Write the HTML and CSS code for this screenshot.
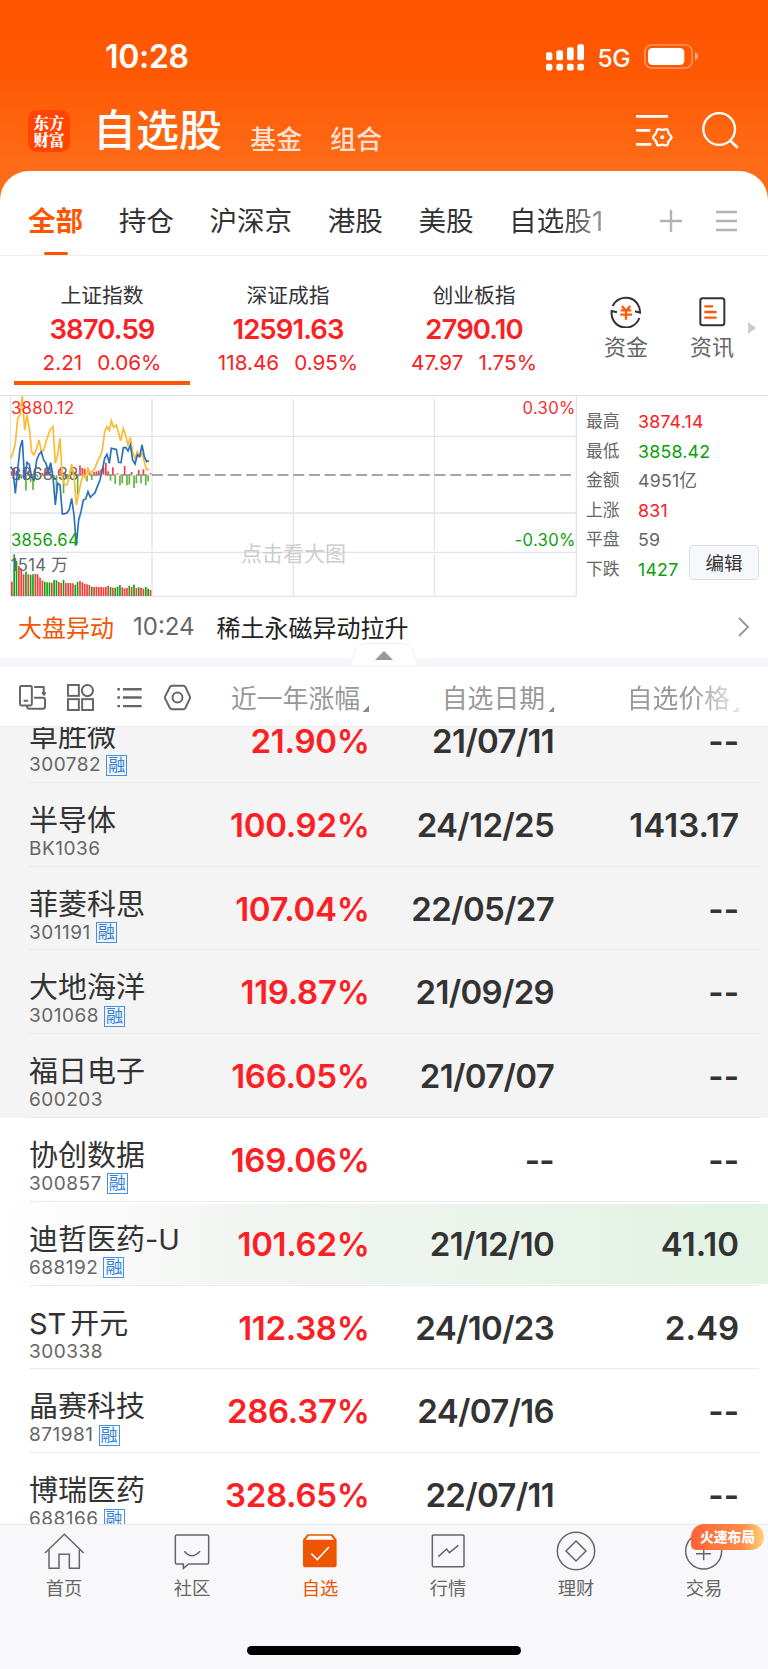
FILE: index.html
```html
<!DOCTYPE html>
<html lang="zh-CN">
<head>
  <meta charset="UTF-8" />
  <meta name="viewport" content="width=device-width, initial-scale=1.0"/>
  <title>自选股</title>
  <link rel="stylesheet" href="styles.css">
</head>
<body>

  <header class="header">
    <div class="status-bar">
      <span class="time">10:28</span>
      <svg class="signal" viewBox="0 0 114 80" width="38" height="27" fill="#fff">
        <rect x="0" y="24" width="19" height="24" rx="6"/><rect x="31" y="18" width="20" height="30" rx="6"/>
        <rect x="63" y="9" width="20" height="39" rx="6"/><rect x="94" y="0" width="20" height="48" rx="6"/>
        <rect x="0" y="59" width="19" height="20" rx="6"/><rect x="31" y="59" width="20" height="20" rx="6"/>
        <rect x="63" y="59" width="20" height="20" rx="6"/><rect x="94" y="59" width="20" height="20" rx="6"/>
      </svg>
      <span class="network">5G</span>
      <svg class="battery" viewBox="0 0 162 76" width="54" height="25.3">
        <rect x="2.5" y="2.5" width="142" height="70" rx="21" fill="none" stroke="#fff" stroke-opacity=".45" stroke-width="4"/>
        <rect x="12" y="12" width="109" height="51" rx="13" fill="#fff"/>
        <path d="M153 24Q162 28 162 37Q162 46 153 50Z" fill="#fff" fill-opacity=".5"/>
      </svg>
    </div>
    <div class="app-bar">
      <div class="logo">东方<br>财富</div>
      <h1>自选股</h1>
      <a class="sub">基金</a>
      <a class="sub">组合</a>
      <svg class="icon-filter" viewBox="0 0 112 100" width="37.3" height="33.3" fill="none" stroke="#fff" stroke-width="8">
        <path d="M0 7H96M0 49H43M0 91H46"/>
        <path d="M103.6 64.8Q110 70 103.6 75.2Q97.2 80.5 95.8 88.6Q94.5 96.8 86.8 93.9Q79 91 71.2 93.9Q63.5 96.8 62.2 88.6Q60.8 80.5 54.4 75.2Q48 70 54.4 64.8Q60.8 59.5 62.2 51.4Q63.5 43.2 71.2 46.1Q79 49 86.8 46.1Q94.5 43.2 95.8 51.4Q97.2 59.5 103.6 64.8Z" stroke-width="7"/>
        <circle cx="79" cy="70" r="6" fill="#fff" stroke="none"/>
      </svg>
      <svg class="icon-search" viewBox="0 0 110 110" width="36.7" height="36.7" fill="none" stroke="#fff" stroke-width="7">
        <circle cx="51.5" cy="51" r="47.5"/>
        <path d="M85 86L107 107" stroke-width="8"/>
      </svg>
    </div>
  </header>

  <main class="panel">
    <nav class="groups">
      <a class="active">全部</a>
      <a>持仓</a>
      <a>沪深京</a>
      <a>港股</a>
      <a>美股</a>
      <a class="fade">自选股1</a>
      <svg class="icon-add" viewBox="0 0 22 22" width="22" height="22" stroke="#b3b3b3" stroke-width="2.4"><path d="M0 11H22M11 0V22"/></svg>
      <svg class="icon-menu" viewBox="0 0 21 22" width="21" height="22" stroke="#b3b3b3" stroke-width="2.4"><path d="M0 2H21M0 11H21M0 20H21"/></svg>
    </nav>

    <section class="indices">
      <div class="index active">
        <span class="label">上证指数</span>
        <strong>3870.59</strong>
        <span class="change"><i>2.21</i><i>0.06%</i></span>
      </div>
      <div class="index">
        <span class="label">深证成指</span>
        <strong>12591.63</strong>
        <span class="change"><i>118.46</i><i>0.95%</i></span>
      </div>
      <div class="index">
        <span class="label">创业板指</span>
        <strong>2790.10</strong>
        <span class="change"><i>47.97</i><i>1.75%</i></span>
      </div>
      <div class="shortcut">
        <svg viewBox="0 0 96 96" width="32" height="32" fill="none" stroke="#333" stroke-width="6">
          <path d="M8 30A43 43 0 0 1 90 50L75 46M88 66A43 43 0 0 1 5 45L21 49"/>
          <g stroke="#ff5a0a" stroke-width="7"><path d="M36 30L46 42M61 30L50 42M32 43H64M31 56H66M48 42V71"/></g>
        </svg>
        <span>资金</span>
      </div>
      <div class="shortcut">
        <svg viewBox="0 0 96 96" width="32" height="32" fill="none" stroke="#333" stroke-width="6">
          <rect x="13" y="7" width="72" height="81" rx="7"/>
          <path d="M25 31H51M25 48H62M25 65H62" stroke="#ff5a0a" stroke-width="7"/>
        </svg>
        <span>资讯</span>
      </div>
      <span class="more"></span>
    </section>

    <section class="market">
      <svg class="chart" viewBox="30 15 1704 606" width="568" height="202">
        <g fill="none" stroke="#e1e4ec" stroke-width="4">
          <path d="M31 17V620M31 619H1730"/>
          <path d="M31 139H1729M31 369H1729M31 487H1729M456 25V482M456 493V619M880 25V482M880 493V619M1303 25V482M1303 493V619M1729 17V619"/>
        </g>
        <text class="watermark" x="723" y="512">点击看大图</text>
        <path d="M32 255H1713" stroke="#888" stroke-width="4" stroke-dasharray="33 14.1"/>
        <g id="bars"></g>
        <text class="mid" x="33" y="270">3868.38</text>
        <text class="mid" x="32" y="543">1514 万</text>
        <g fill="none" stroke-width="5">
          <polyline stroke="#ffb92e" points="32,205 40,185 46,160 53,85 60,75 67,18 74,120 81,75 88,115 95,185 102,195 110,175 117,150 124,185 131,180 138,155 150,120 159,110 166,220 173,195 180,145 187,265 194,285 201,285 208,260 215,222 222,260 229,345 236,310 243,275 250,255 257,265 264,235 271,250 285,235 292,215 300,200 307,180 314,125 321,110 328,122 334,92 341,112 349,105 362,152 370,115 378,140 384,165 391,142 398,185 405,205 412,185 419,200 426,190 433,215 440,240 447,236"/>
          <polyline stroke="#296fbe" points="32,230 39,240 46,310 53,240 60,175 67,150 74,270 81,217 88,223 95,262 102,270 110,210 117,193 124,185 131,210 138,220 145,245 152,218 159,260 166,345 173,280 180,285 187,372 194,371 201,369 208,358 215,325 222,375 229,465 236,390 243,365 250,330 257,327 264,305 271,322 278,315 285,308 292,290 300,270 307,240 314,205 321,193 328,220 334,175 349,178 356,217 363,218 370,173 377,172 384,183 391,165 398,210 405,222 412,195 419,200 426,165 433,200 440,215 447,212"/>
        </g>
        <text class="up" x="33" y="72">3880.12</text>
        <text class="up" x="1727" y="72" text-anchor="end">0.30%</text>
        <text class="down" x="33" y="469">3856.64</text>
        <text class="down" x="1727" y="469" text-anchor="end">-0.30%</text>
      </svg>
      <dl class="stats">
        <dt>最高</dt><dd class="up">3874.14</dd>
        <dt>最低</dt><dd class="down">3858.42</dd>
        <dt>金额</dt><dd>4951亿</dd>
        <dt>上涨</dt><dd class="up">831</dd>
        <dt>平盘</dt><dd>59</dd>
        <dt>下跌</dt><dd class="down">1427</dd>
      </dl>
      <button class="edit">编辑</button>
    </section>

    <section class="news">
      <span class="tag">大盘异动</span>
      <span class="when">10:24</span>
      <span class="headline">稀土永磁异动拉升</span>
      <svg viewBox="0 0 12 20" width="12" height="20" fill="none" stroke="#999" stroke-width="2"><path d="M1 1L10 10L1 19"/></svg>
      <svg class="handle" viewBox="0 0 66 23" width="66" height="23">
        <path d="M0 22.5Q1 17 3 11Q5 1 15 .5H51Q61 1 63 11Q65 17 66 22.5" fill="#fff" stroke="#f0f1f4"/>
        <path d="M24 17L33 8L42 17Z" fill="#999"/>
      </svg>
    </section>

    <section class="toolbar">
      <div class="tools">
        <svg viewBox="0 0 82 82" width="27" height="27" fill="none" stroke="#666" stroke-width="6">
          <rect x="3" y="6" width="36" height="59" rx="4"/>
          <path d="M14 51H28M46 9H75V29M70 25L76 32L81 25M46 42H72Q79 42 79 48V68Q79 75 73 75H31Q24 75 24 65"/>
        </svg>
        <svg viewBox="0 0 82 82" width="27" height="27" fill="none" stroke="#666" stroke-width="6">
          <rect x="3" y="3" width="33" height="33"/><circle cx="62" cy="20" r="17"/>
          <rect x="3" y="46" width="33" height="33"/><rect x="46" y="46" width="33" height="33"/>
        </svg>
        <svg viewBox="0 0 82 82" width="27" height="27" fill="none" stroke="#666" stroke-width="7">
          <path d="M21 16H78M21 41H78M21 67H78"/>
          <path d="M4 16H12M4 41H12M4 67H12"/>
        </svg>
        <svg viewBox="0 0 82 82" width="27" height="27" fill="none" stroke="#666" stroke-width="6">
          <path d="M23 5H60L65 9L78 37Q80 41 78 45L65 73L60 77H23L18 73L4 45Q2 41 4 37L18 9Z"/>
          <circle cx="41" cy="41" r="15"/>
        </svg>
      </div>
      <span class="col">近一年涨幅</span>
      <span class="col">自选日期</span>
      <span class="col fade">自选价格</span>
    </section>

    <section class="list">
      <div class="row pinned"><div class="name">卓胜微</div><div class="code">300782<em>融</em></div><b class="up">21.90%</b><b class="date">21/07/11</b><b>--</b></div>
      <div class="row pinned"><div class="name">半导体</div><div class="code">BK1036</div><b class="up">100.92%</b><b class="date">24/12/25</b><b>1413.17</b></div>
      <div class="row pinned"><div class="name">菲菱科思</div><div class="code">301191<em>融</em></div><b class="up">107.04%</b><b class="date">22/05/27</b><b>--</b></div>
      <div class="row pinned"><div class="name">大地海洋</div><div class="code">301068<em>融</em></div><b class="up">119.87%</b><b class="date">21/09/29</b><b>--</b></div>
      <div class="row pinned"><div class="name">福日电子</div><div class="code">600203</div><b class="up">166.05%</b><b class="date">21/07/07</b><b>--</b></div>
      <div class="row"><div class="name">协创数据</div><div class="code">300857<em>融</em></div><b class="up">169.06%</b><b class="date">--</b><b>--</b></div>
      <div class="row flash"><div class="name">迪哲医药-U</div><div class="code">688192<em>融</em></div><b class="up">101.62%</b><b class="date">21/12/10</b><b>41.10</b></div>
      <div class="row"><div class="name">ST<span>开元</span></div><div class="code">300338</div><b class="up">112.38%</b><b class="date">24/10/23</b><b>2.49</b></div>
      <div class="row"><div class="name">晶赛科技</div><div class="code">871981<em>融</em></div><b class="up">286.37%</b><b class="date">24/07/16</b><b>--</b></div>
      <div class="row"><div class="name">博瑞医药</div><div class="code">688166<em>融</em></div><b class="up">328.65%</b><b class="date">22/07/11</b><b>--</b></div>
    </section>
  </main>

  <footer class="tab-bar">
    <nav>
      <a>
        <svg viewBox="0 0 120 120" width="40" height="40"><path d="M3 66L61 10L119 66M15 56V112H45V70H76V112H106V56"/></svg>
        首页
      </a>
      <a>
        <svg viewBox="0 0 120 120" width="40" height="40"><path d="M14 12H106Q110 12 110 16V95Q110 99 106 99H50L34 112V99H14Q10 99 10 95V16Q10 12 14 12ZM37 61Q59 88 84 61"/></svg>
        社区
      </a>
      <a class="active">
        <svg viewBox="0 0 120 120" width="40" height="40">
          <path class="solid" d="M22 10H98L110 26V102Q110 109 102 109H17Q9 109 9 102V26Z"/>
          <path class="lid" d="M26 14H93L102 26H17Z"/>
          <path class="tick" d="M34 68L52 86L87 48"/>
        </svg>
        自选
      </a>
      <a>
        <svg viewBox="0 0 120 120" width="40" height="40"><rect x="13" y="12" width="95" height="95" rx="3"/><path d="M31 77L56 54L64 65L91 43"/></svg>
        行情
      </a>
      <a>
        <svg viewBox="0 0 120 120" width="40" height="40"><circle cx="60" cy="60" r="56"/><path d="M60 30L90 60L60 90L30 60Z"/></svg>
        理财
      </a>
      <a>
        <svg viewBox="0 0 120 120" width="40" height="40"><circle cx="59" cy="60" r="54"/><path d="M40 30L59 50L78 30M36 50H81M36 68H81M59 50V88"/></svg>
        交易
        <span class="badge">火速布局</span>
      </a>
    </nav>
    <div class="home-indicator"></div>
  </footer>

  <script>
    const RED = "#f23c3c";
    const GREEN = "#14a014";
    const STEP = 7.05;
    const bars = document.getElementById("bars");

    function addBar(i, top, height, color) {
      const rect = document.createElementNS("http://www.w3.org/2000/svg", "rect");
      rect.setAttribute("x", 33 + i * STEP);
      rect.setAttribute("y", top);
      rect.setAttribute("width", 5);
      rect.setAttribute("height", height);
      rect.setAttribute("fill", color);
      bars.appendChild(rect);
    }

    // volume per minute, negative = falling
    const volume = [43, -125, -105, 90, 82, 65, -73, 65, -64, -65, 66, 65, 55, 46, -43, -41, -41, 40, -48, -47, 42, 39, -48, 39, 39, 39, 38, -34, -42, 45, 41, 37, 35, 33, -28, 27, 28, 27, 27, 26, 27, 31, -27, 25, -25, -28, -33, 26, 23, 24, -31, 27, -34, 24, -26, 25, 22, -27, -22, 18];
    volume.forEach((v, i) => addBar(i, 618 - Math.abs(v), Math.abs(v), v > 0 ? RED : GREEN));

    // strength around the middle line
    const strength = [10, 20, 12, -15, -10, 15, -46, 12, -20, -44, -8, -6, 5, 5, 8, 16, 5, -8, -14, -56, 15, 22, -54, -10, -14, -8, 14, 8, -58, 28, 20, 18, -18, 10, -14, 8, 10, 12, 16, 22, 36, 10, -16, 22, -26, 4, -30, -24, 26, -30, -28, 8, -38, -24, 14, -24, 16, -30, -18, 4];
    strength.forEach((v, i) => addBar(i, v > 0 ? 254 - v : 256, Math.abs(v), v > 0 ? RED : "#5fb53c"));
  </script>

</body>
</html>
```
FILE: styles.css
```css
* {
  margin: 0;
  padding: 0;
  box-sizing: border-box;
}

body {
  width: 768px;
  height: 1669px;
  overflow: hidden;
  font-family: Inter, 'Noto Sans CJK SC', sans-serif;
  color: #333;
  background: linear-gradient(#ff5500 0, #ff5803 75px, #ff6c18 165px, #ff6c18 100%);
}

svg {
  display: block;
  flex: none;
}

.up {
  color: #fb2024;
  fill: #f23030;
}

.down {
  color: #0da00d;
  fill: #0da00d;
}

.header {
  height: 171px;
  color: #fff;
}

.status-bar {
  display: flex;
  align-items: center;
  height: 90px;
  padding: 24px 70px 0 105px;
}

.time {
  font-size: 32px;
  font-weight: 600;
  letter-spacing: -0.3px;
  margin: -2px auto 0 0;
}

.network {
  font-size: 24.5px;
  font-weight: 500;
  letter-spacing: -0.5px;
  margin: 2px 14px 0 14px;
}

.app-bar {
  display: flex;
  align-items: center;
  height: 81px;
  padding: 0 29px 0 28px;
}

.logo {
  width: 42px;
  height: 42px;
  border-radius: 9px;
  background: #ff4503;
  font-family: 'Noto Serif CJK SC', 'Noto Sans CJK SC', serif;
  font-size: 15.5px;
  font-weight: 900;
  line-height: 17px;
  padding-top: 4px;
  text-align: center;
}

h1 {
  margin: -1px 0 0 23px;
  font-size: 43px;
  font-weight: 500;
  line-height: 60px;
}

.sub {
  margin: 13px 0 0 28px;
  font-size: 26px;
  font-weight: 500;
  opacity: 0.8;
}

.icon-filter {
  margin-left: auto;
}

.icon-search {
  margin-left: 29px;
}

.panel {
  height: 1353px;
  overflow: hidden;
  border-radius: 29px 29px 0 0;
  background: #fff;
}

.groups {
  display: flex;
  align-items: center;
  height: 85px;
  padding: 16px 31px 0 28px;
  border-bottom: 1px solid #eee;
}

.groups a {
  position: relative;
  margin-right: 35.5px;
  font-size: 27.6px;
  line-height: 40px;
}

.groups .active {
  color: #ff5500;
  font-weight: 600;
}

.groups .active::after {
  content: "";
  position: absolute;
  left: 16px;
  bottom: -14px;
  width: 24px;
  height: 3px;
  border-radius: 2px;
  background: #ff5500;
}

.groups .fade {
  margin-right: 0;
  white-space: nowrap;
  background: linear-gradient(90deg, #333 50%, #999);
  -webkit-background-clip: text;
  color: transparent;
}

.icon-add {
  margin-left: auto;
}

.icon-menu {
  margin-left: 34px;
}

.indices {
  display: flex;
  height: 139px;
  padding: 25px 0 0 9px;
}

.index {
  width: 186px;
  height: 104px;
  display: flex;
  flex-direction: column;
  align-items: center;
  white-space: nowrap;
}

.index.active {
  background: linear-gradient(#ff5500, #ff5500) center bottom / 176px 4px no-repeat;
}

.index .label {
  font-size: 20.8px;
  line-height: 30px;
}

.index strong {
  color: #fb2024;
  font-size: 27.5px;
  font-weight: 600;
  line-height: 36px;
  letter-spacing: -0.9px;
}

.change {
  display: flex;
  gap: 15px;
  color: #fb2024;
  font-size: 20.7px;
  line-height: 32px;
}

.change i {
  font-style: normal;
}

.shortcut {
  width: 86px;
  padding-top: 15px;
  display: flex;
  flex-direction: column;
  align-items: center;
  font-size: 22px;
  line-height: 39px;
  color: #666;
}

.shortcut:nth-child(4) {
  margin-left: 16px;
}

.more {
  width: 8px;
  height: 12px;
  margin: 41px 0 0 -7px;
  background: #ccc;
  clip-path: polygon(0 0, 100% 50%, 0 100%);
}

.market {
  display: flex;
  height: 202px;
  padding-left: 10px;
  border-top: 1px solid #dcdfe8;
}

.chart {
  margin-top: -1px;
}

.chart text {
  font-size: 50px;
  letter-spacing: 0.9px;
}

.chart .mid {
  fill: #666;
}

.chart .watermark {
  fill: #ccc;
  font-size: 63px;
  letter-spacing: 0;
}

.stats {
  display: grid;
  grid-template-columns: 52px auto;
  grid-auto-rows: 29.6px;
  align-content: start;
  padding: 11px 0 0 8px;
  line-height: 29.6px;
  color: #666;
  width: 110px;
  white-space: nowrap;
}

.stats dt {
  font-size: 16.8px;
}

.stats dd {
  font-size: 17.8px;
  letter-spacing: 0.2px;
}

.edit {
  align-self: flex-end;
  width: 70px;
  height: 35px;
  margin: 0 0 17px 1px;
  border: 1px solid #dcdfe6;
  border-radius: 4px;
  background: #f7f8fb;
  color: #333;
  font: 18.5px/32px Inter, 'Noto Sans CJK SC', sans-serif;
}

.news {
  position: relative;
  display: flex;
  align-items: center;
  height: 70px;
  padding: 0 18px 2px;
  border-bottom: 9px solid #f5f6fa;
  font-size: 24px;
}

.tag {
  color: #f25500;
}

.when {
  margin: 0 22px 0 19px;
  color: #666;
}

.headline {
  color: #222;
  margin-right: auto;
}

.handle {
  position: absolute;
  left: 351px;
  top: 46px;
}

.toolbar {
  display: flex;
  align-items: center;
  height: 60px;
  padding: 0 29px 0 19px;
  border-bottom: 1px solid #eee;
  color: #999;
  font-size: 25.8px;
}

.tools {
  display: flex;
  gap: 21.3px;
  width: 180px;
  padding-top: 1px;
}

.col {
  width: 185px;
  padding-right: 9px;
  text-align: right;
  white-space: nowrap;
  background: linear-gradient(135deg, transparent 50%, #8b8b95 50%) right 28px / 6px 6px no-repeat;
}

.col:nth-child(2) {
  width: 170px;
}

.col.fade {
  -webkit-mask-image: linear-gradient(90deg, #000 75%, rgba(0, 0, 0, 0.2));
  mask-image: linear-gradient(90deg, #000 75%, rgba(0, 0, 0, 0.2));
}

.list {
  height: 797px;
  overflow: hidden;
}

.row {
  position: relative;
  display: grid;
  grid-template-columns: 184px 155px 185px 185px;
  grid-template-rows: 30px 26px;
  align-content: start;
  height: 83.8px;
  padding: 23px 0 0 29px;
}

.row:first-child {
  margin-top: -28px;
}

.row::after {
  content: "";
  position: absolute;
  left: 29px;
  right: 9px;
  bottom: 0;
  border-bottom: 1px solid #ebebeb;
}

.pinned {
  background: #f4f4f4;
}

.flash {
  background: linear-gradient(90deg, #fff, #f3f5f3 30%, #e1f3e2) 0 2px / 100% 80px no-repeat;
}

.name {
  font-size: 29px;
  line-height: 30px;
  white-space: nowrap;
}

.name span {
  margin-left: 4px;
}

.code {
  grid-column: 1;
  grid-row: 2;
  display: flex;
  align-items: center;
  font-size: 19px;
  line-height: 26px;
  letter-spacing: 0.5px;
  color: #666;
}

.code em {
  width: 21px;
  height: 21px;
  margin-left: 5px;
  border: 1px solid #4a90e2;
  color: #2f80dd;
  font-size: 17px;
  font-style: normal;
  letter-spacing: 0;
  line-height: 18px;
  text-align: center;
}

.row b {
  grid-row: 1 / 3;
  margin-right: -1px;
  font-size: 33px;
  font-weight: 600;
  line-height: 38px;
  text-align: right;
}

.row b.up {
  margin-right: -1.5px;
  letter-spacing: -0.3px;
}

.row b.date {
  letter-spacing: -0.7px;
}

.tab-bar {
  height: 145px;
  border-top: 1px solid #e6e6ea;
  background: #f8f8fb;
}

.tab-bar nav {
  display: grid;
  grid-template-columns: repeat(6, 128px);
  height: 121px;
}

.tab-bar a {
  position: relative;
  display: flex;
  flex-direction: column;
  align-items: center;
  padding-top: 6px;
  font-size: 18.3px;
  line-height: 34px;
  color: #666;
}

.tab-bar svg {
  fill: none;
  stroke: #666;
  stroke-width: 4.5;
}

.tab-bar .active {
  color: #ee5500;
}

.tab-bar .solid {
  fill: #ee5500;
  stroke: none;
}

.tab-bar .lid {
  fill: #fff;
  stroke: none;
}

.tab-bar .tick {
  stroke: #fff;
  stroke-width: 5;
}

.badge {
  position: absolute;
  left: 51px;
  top: -1px;
  width: 73px;
  height: 26px;
  border-radius: 13px 13px 13px 5px;
  background: linear-gradient(90deg, #ff6336, #ff8a48 70%, #ffd27c);
  color: #fff;
  font-size: 13.8px;
  font-weight: 900;
  line-height: 26px;
  text-align: center;
}

.home-indicator {
  width: 274px;
  height: 9px;
  margin: 0 auto;
  border-radius: 5px;
  background: #000;
}
```
